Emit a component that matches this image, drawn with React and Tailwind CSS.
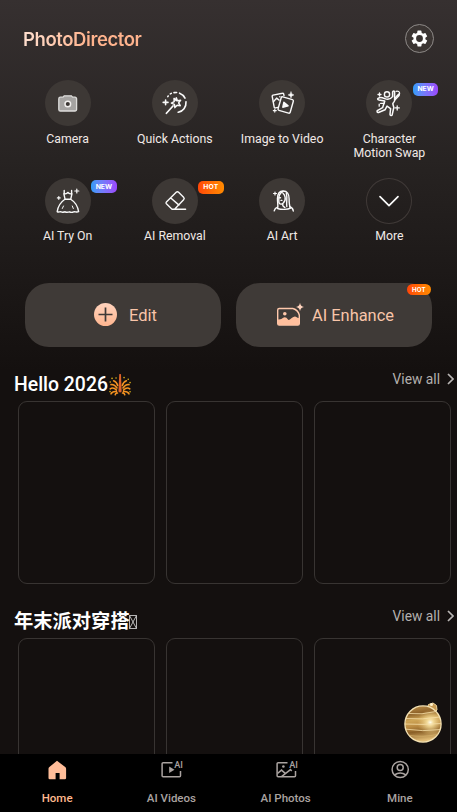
const stroke = {
  fill: "none",
  stroke: "currentColor",
  strokeWidth: 1.4,
  strokeLinecap: "round",
  strokeLinejoin: "round",
};

const CameraIcon = () => (
  <svg width="46" height="46" viewBox="0 0 46 46">
    <path d="M18 17.2l1.2-1.4h7.2l1.2 1.4h2.4a1.6 1.6 0 0 1 1.6 1.6v10.6a1.6 1.6 0 0 1-1.6 1.6H15.4a1.6 1.6 0 0 1-1.6-1.6V18.8a1.6 1.6 0 0 1 1.6-1.6z" fill="#a5a3a1" stroke="#dedddb" strokeWidth="1.3" />
    <circle cx="22.8" cy="24" r="2.8" fill="#3b3633" stroke="#f1efed" strokeWidth="1.5" />
  </svg>
);

const WandIcon = () => (
  <svg width="46" height="46" viewBox="0 0 46 46" {...stroke}>
    <path d="M24.3 17.8l1.1 3 3.2-.5-2 2.6 1.7 2.8-3.2-.5-2.2 2.4-.5-3.2-3-1.3 2.8-1.5-.2-3.2 2.3 2.2z" strokeWidth="1.5" />
    <path d="M21 26l-6.6 7.3" strokeWidth="1.7" />
    <path d="M13.6 20v4.8M11.2 22.4H16" strokeWidth="1.6" />
    <path d="M15.8 16.6l.4-.6M18.3 13.9l1-.5M22 12.6l2.6-.1M27.6 13.2c2.6 1 4.3 2.7 5.4 4.9M34 21.8c.4 5.4-3 9.4-7.8 10.5" strokeWidth="1.6" />
  </svg>
);

const ImageVideoIcon = () => (
  <svg width="46" height="46" viewBox="0 0 46 46" {...stroke}>
    <path d="M25 15.6l-.3-1.5a1 1 0 0 0-1.2-.8l-9.5 1.8a1 1 0 0 0-.8 1.2l2 10.8a1 1 0 0 0 1.2.8l2.6-.5" />
    <path d="M14.4 21.7l3.2-3.6 2.5 2M20.8 16.8h.1" />
    <rect x="20.4" y="18" width="12.6" height="14" rx="1.3" transform="rotate(16 26.7 25)" />
    <path d="M24.9 22.2l-1.1 5 5.3-1.3z" fill="currentColor" />
    <path d="M32 11.8q.3 2.8 3 3.1-2.7.3-3 3.1-.3-2.8-3-3.1 2.7-.3 3-3.1z" fill="currentColor" strokeWidth=".4" />
    <path d="M15.8 29.1v3M14.3 30.6h3" strokeWidth="1.1" />
  </svg>
);

const DancerIcon = () => (
  <svg width="46" height="46" viewBox="0 0 46 46" {...stroke}>
    <circle cx="21" cy="14.4" r="2.6" />
    <path d="M12.4 18.2c2.3-1.4 4.400-.4 6.400.4 3.200 1.200 6.100.2 7.800-2V12c.3-1.500 2-1.300 2 0v8.600c-.3 1.300-1.400 2-1.800 3.100l1 3.800-1.600 7.200c-.4 1.300-2.300 1-2.200-.4l.6-5.700-3.600-2.500-2 3.700-6.500 2.700c-1.500.3-2-1.600-.7-2.200l4.800-2.600 2.200-6.600-5.800-1.100c-1.400-.3-1.800-1.400-.6-1.800z" strokeWidth="1.500" />
    <path d="M30 11.300c4.700-.9 4.700 3.900 1.100 6.500l-2.500 2.400M32.700 14l-3.700 4M14.500 23.300h3.700" strokeWidth="1.200" />
    <path d="M31.200 25.800v4.200M29.100 27.900h4.200M13.500 13v3M12 14.500h3M13.200 24.200v2" strokeWidth="1.300" />
  </svg>
);

const DressIcon = () => (
  <svg width="46" height="46" viewBox="0 0 46 46" {...stroke}>
    <path d="M19.200 12.400v3.100M26.600 12.400v3.100M18.800 15.700c2.200.4 3.500-.2 4.100-1.300.6 1.100 1.900 1.700 4.100 1.300l-1.300 5.600h-5.600z" />
    <path d="M19.600 21.500c-4 2.700-6.600 7-7.400 12.100 1.400 1.100 2.600-.3 4 .3 1.500.8 2.600 0 4-.1 1.700 1 2.900.5 4.300 0 1.400.7 2.700.8 4.100.1 1.500-.7 2.700.8 5-.2-.9-5.600-3.400-9.700-7.600-12.200" />
    <path d="M18.500 28l-1.200 2.500M27.300 28l1 2.500" strokeWidth="1" />
    <path d="M31.800 11v4M29.800 13h4M13.800 18.500v2.800M12.400 19.900h2.800" strokeWidth="1.200" />
  </svg>
);

const EraserIcon = () => (
  <svg width="46" height="46" viewBox="0 0 46 46" {...stroke}>
    <path d="M20 31.200h13.600M20 31.200l-5.600-5.400a1.300 1.300 0 0 1 0-1.800l9.800-9.700a1.700 1.700 0 0 1 2.400 0l5 5a1.700 1.700 0 0 1 0 2.400L22.800 31M18.800 20l8.200 7.100" />
  </svg>
);

const ArtIcon = () => (
  <svg width="46" height="46" viewBox="0 0 46 46" {...stroke}>
    <path d="M18.600 30.500c.8-3.500-.3-6.300-.1-10.100.1-4.600 2-7.300 5.600-7.400 4.100-.1 6 3.100 6 7.700 0 4 .2 7 1.400 9.400-2.600 1.600-9.300 1.700-12.900.4z" />
    <path d="M24 13.400c-3.400 2-4.400 4.500-4.200 7.800l.1 3.200c.8 2 2.600 2.200 4.200.8 1.800-1.600 2.500-3.700 2-6.100-.3-1.600-.9-3-2.100-3.900M27.300 15.200c1.300 5.300-.1 8.200.5 13.300M23.800 26v1.800l2.100 1.800M20.900 19.700h.6M22 22.400h.9" />
    <path d="M18.600 29.100c-2 .7-3 2-3.400 3.700M30.700 28.800c2.200.6 3.300 2.100 3.600 4.200" />
    <path d="M16 14v3M14.500 15.500h3" strokeWidth="1.200" />
  </svg>
);

const MoreIcon = () => (
  <svg width="46" height="46" viewBox="0 0 46 46" {...stroke} strokeWidth="1.700">
    <path d="M14 18.600l9 9 9-9" />
  </svg>
);

const tools = [
  { label: "Camera", Icon: CameraIcon },
  { label: "Quick Actions", Icon: WandIcon },
  { label: "Image to Video", Icon: ImageVideoIcon },
  { label: "Character Motion Swap", Icon: DancerIcon, badge: "NEW" },
  { label: "AI Try On", Icon: DressIcon, badge: "NEW" },
  { label: "AI Removal", Icon: EraserIcon, badge: "HOT" },
  { label: "AI Art", Icon: ArtIcon },
  { label: "More", Icon: MoreIcon, outline: true },
];

function ToolItem({ label, Icon, badge, outline }) {
  return (
    <div className="flex flex-col items-center">
      <div
        className={`relative h-[46px] w-[46px] rounded-full text-[#fafafa] ${
          outline ? "shadow-[inset_0_0_0_1px_#403a38]" : "bg-[#3d3835]"
        }`}
      >
        <Icon />
        {badge === "NEW" && (
          <span className="absolute left-[46.5px] top-[2.5px] flex h-[13px] w-[25.5px] items-center justify-center rounded-[5px] bg-linear-to-r from-[#2a9cf8] to-[#9a45fc] font-[Inter,sans-serif] text-[6.8px] font-bold text-white">
            NEW
          </span>
        )}
        {badge === "HOT" && (
          <span className="absolute left-[46px] top-[3px] flex h-[13px] w-[26px] items-center justify-center rounded-[5px] bg-linear-to-r from-[#ff4608] to-[#ff8a00] font-[Inter,sans-serif] text-[6.8px] font-bold tracking-[0.2px] text-white">
            HOT
          </span>
        )}
      </div>
      <span className="mt-[5.6px] max-w-[84px] text-center text-[12.3px] leading-[14px] text-[#f1e9e6]">
        {label}
      </span>
    </div>
  );
}

const FireworkEmoji = () => (
  <svg className="ml-px" width="22" height="22" viewBox="0 0 22 22" fill="none" strokeLinecap="round">
    <path d="M7.500 16C5 13.500 3 13.500 1.200 14.800M7.500 17.600c-2.500-.3-4.500.2-5.500 2.300M8.500 19c-1.500.2-2.200.9-2.300 1.800M8 14C6.400 11.600 4.400 10.200 2 10.600M8.700 11.500C8 9 7 7.600 4.600 6.800M14.500 16c2.500-2.500 4.500-2.500 6.300-1.200M14.500 17.600c2.500-.3 4.500.2 5.500 2.300M13.500 19c1.500.2 2.200.9 2.300 1.800M14 14c1.600-2.400 3.600-3.800 6-3.400M13.300 11.500c.7-2.500 1.700-3.900 4.100-4.700" stroke="#f59322" strokeWidth="1.600" />
    <path d="M3 4.400h.1M7 4h.1M1.200 8h.1M1 17.600h.1M15 3.600h.1M19.200 5.200h.1M21 8.600h.1M21 17.800h.1" stroke="#d3aa19" strokeWidth="1.600" />
    <path d="M10.200.8a.9.900 0 0 1 1.800 0l.6 15.600a1.600 1.600 0 1 1-3.100 0z" fill="#de622b" />
  </svg>
);

// Box shown when the title's emoji has no glyph
const MissingGlyph = () => (
  <svg className="-ml-px" width="8" height="14" viewBox="0 0 8 14" fill="none" stroke="#dedede" strokeWidth=".8">
    <path d="M.5.5h7v13h-7zM.5.5l7 13M7.500.5l-7 13" />
  </svg>
);

function Section({ title, emoji, className, titleClass }) {
  return (
    <section className={className}>
      <div className="flex h-[29px] items-start justify-between pl-3.5">
        <h2 className={`flex h-[26px] items-center whitespace-nowrap leading-6 text-white ${titleClass}`}>
          {title}
          {emoji}
        </h2>
        <button className="-mt-[5px] flex h-6 items-center gap-[7px] pr-[3px] text-[13.8px] text-[#b3afad]">
          View all
          <svg width="7" height="12" viewBox="0 0 7 12" fill="none" stroke="#b8b5b3" strokeWidth="1.7">
            <path d="M1 1l5 5-5 5" />
          </svg>
        </button>
      </div>
      <div className="flex gap-[11px] pl-[18px]">
        {[0, 1, 2].map((i) => (
          <div key={i} className="h-[183px] w-[137px] shrink-0 rounded-[9px] border border-[#383432]" />
        ))}
      </div>
    </section>
  );
}

const Ornament = () => (
  <svg width="42" height="44" viewBox="0 0 42 44">
    <defs>
      <linearGradient id="gold" x1="0" y1="0" x2=".15" y2="1">
        <stop offset="0" stopColor="#c3964e" />
        <stop offset=".25" stopColor="#8c6027" />
        <stop offset=".42" stopColor="#cfa657" />
        <stop offset=".58" stopColor="#bd8e45" />
        <stop offset=".75" stopColor="#8a5f26" />
        <stop offset="1" stopColor="#e0bb75" />
      </linearGradient>
      <radialGradient id="shine" cx=".7" cy=".46" r=".36">
        <stop offset="0" stopColor="#fffdf0" />
        <stop offset=".25" stopColor="#fbe6a6" stopOpacity=".85" />
        <stop offset="1" stopColor="#e9c678" stopOpacity="0" />
      </radialGradient>
      <clipPath id="ball">
        <circle cx="20" cy="24" r="18" />
      </clipPath>
    </defs>
    <path d="M24.500 8l1-3.500 4.500-1.500 3.500 2.500.5 4.500-3 3z" fill="#c79a52" stroke="#f0d79e" />
    <circle cx="28.500" cy="4.600" r="1.500" fill="#fff3cf" />
    <circle cx="20" cy="24" r="18.100" fill="url(#gold)" />
    <circle cx="20" cy="24" r="18.100" fill="url(#shine)" stroke="#f4e1b2" strokeWidth="1.300" />
    <g clipPath="url(#ball)" fill="none" stroke="#f6dfaa" strokeWidth=".8">
      <path d="M5 13.500q14 1.500 28-2M2 18.500q18 1.500 35-1.500M1 24q19 1 38-.5M1 29q19 3 37 .5" />
      <path d="M4 35q16 3 32-1" stroke="#d9b66f" strokeWidth=".6" />
    </g>
  </svg>
);

const HomeIcon = () => (
  <svg width="24" height="24" viewBox="0 0 24 24">
    <path d="M12 2.800l8.200 6.200q.9.7.9 1.800v9.100q0 1.300-1.300 1.300h-5.200v-6.200h-4v6.200H4.800Q3.500 21.200 3.500 19.900v-9.100q0-1.100.9-1.800z" fill="#ffbd99" />
  </svg>
);

const VideosIcon = () => (
  <svg width="24" height="24" viewBox="0 0 24 24" fill="none" stroke="currentColor" strokeWidth="1.5">
    <path d="M13.500 4.700H4.100q-1 0-1 1v12q0 1 1 1h16.400q1 0 1-1V13" />
    <path d="M10.200 8.400v6.600l5.300-3.300z" fill="currentColor" stroke="none" />
    <text x="15.200" y="10.300" fontFamily="Roboto, sans-serif" fontSize="9.2" fontWeight="500" fill="currentColor" stroke="none">AI</text>
  </svg>
);

const PhotosIcon = () => (
  <svg width="24" height="24" viewBox="0 0 24 24" fill="none" stroke="currentColor" strokeWidth="1.5">
    <path d="M13.500 4.700H4.100q-1 0-1 1v12q0 1 1 1h16.400q1 0 1-1V13" />
    <path d="M3.500 15.500l4-3.400 4 3.500M7.500 18.600l9-7 1.200 1.400" />
    <circle cx="9.400" cy="8.500" r="1.300" fill="currentColor" stroke="none" />
    <text x="15.200" y="10.300" fontFamily="Roboto, sans-serif" fontSize="9.2" fontWeight="500" fill="currentColor" stroke="none">AI</text>
  </svg>
);

const MineIcon = () => (
  <svg width="24" height="24" viewBox="0 0 24 24" fill="none" stroke="currentColor" strokeWidth="1.5">
    <circle cx="12.2" cy="11.500" r="8.100" />
    <circle cx="12.2" cy="9.500" r="3" />
    <path d="M6.400 17q5.800-3.800 11.600 0" />
  </svg>
);

const tabs = [
  { label: "Home", Icon: HomeIcon, active: true },
  { label: "AI Videos", Icon: VideosIcon },
  { label: "AI Photos", Icon: PhotosIcon },
  { label: "Mine", Icon: MineIcon },
];

export default function App() {
  return (
    <div className="relative flex h-[812px] w-[457px] flex-col overflow-hidden bg-[#14100f] font-[Roboto,'Noto_Sans_CJK_SC',sans-serif]">
      <main className="flex-1 overflow-hidden bg-[linear-gradient(180deg,#363030_0px,#272322_160px,#14100f_370px)]">
        <header className="flex h-[76px] items-center justify-between px-[23px]">
          <h1 className="mt-[3px] bg-linear-to-r from-[#ffe0d0] to-[#ffb38d] to-55% bg-clip-text font-[Inter,sans-serif] text-[18.5px] font-semibold tracking-[-0.42px] text-transparent">
            PhotoDirector
          </h1>
          <button className="flex h-[29px] w-[29px] items-center justify-center rounded-full border border-[#8d8987] bg-[#3b3533]">
            <svg width="19" height="19" viewBox="0 0 24 24" fill="#fff">
              <path d="M19.400 13a7.600 7.600 0 0 0 0-2l2.100-1.600c.2-.2.3-.5.1-.7l-2-3.400c-.1-.2-.4-.3-.6-.2l-2.500 1a7.500 7.500 0 0 0-1.700-1l-.4-2.600a.5.500 0 0 0-.5-.5h-4a.5.500 0 0 0-.5.500L9 5.100a7.500 7.500 0 0 0-1.700 1l-2.500-1c-.2-.1-.5 0-.6.200l-2 3.400c-.2.200-.1.500.1.700L4.500 11a7.600 7.600 0 0 0 0 2l-2.200 1.600c-.2.200-.3.500-.1.700l2 3.400c.1.200.4.300.6.200l2.500-1c.5.400 1.100.7 1.700 1l.4 2.600c0 .3.200.5.500.5h4c.3 0 .5-.2.500-.5l.4-2.600a7.500 7.500 0 0 0 1.700-1l2.500 1c.2.100.5 0 .6-.2l2-3.400c.2-.2.100-.5-.1-.7zM12 16.300a4.300 4.300 0 1 1 0-8.600 4.300 4.300 0 0 1 0 8.600z" />
            </svg>
          </button>
        </header>

        <div className="grid grid-cols-4 gap-y-[18px] px-3.5 pt-1">
          {tools.map((tool) => (
            <ToolItem key={tool.label} {...tool} />
          ))}
        </div>

        <div className="mt-[39.8px] flex gap-[15px] pl-[25px]">
          <button className="flex h-16 w-[196px] items-center justify-center gap-3 rounded-3xl bg-[#3f3a37] pl-[5px] text-[16.5px] text-[#f9c5a9]">
            <svg width="23" height="23" viewBox="0 0 23 23">
              <defs>
                <linearGradient id="peach" x1="0" y1="0" x2="0" y2="1">
                  <stop offset="0" stopColor="#ffd3bd" />
                  <stop offset="1" stopColor="#ffb690" />
                </linearGradient>
              </defs>
              <circle cx="11.500" cy="11.500" r="11.500" fill="url(#peach)" />
              <path d="M11.500 4.500v14M4.500 11.500h14" stroke="#3f3a37" strokeWidth="1.700" />
            </svg>
            <span className="pt-0.5">Edit</span>
          </button>
          <button className="relative flex h-16 w-[196px] items-center justify-center gap-2 rounded-3xl bg-[#3f3a37] pl-0.5 text-[16.4px] text-[#f9c5a9]">
            <svg width="28" height="26" viewBox="0 0 28 26">
              <path d="M17 6.500H3.200Q1.700 6.500 1.700 8v13.500Q1.700 23 3.200 23h18.600q1.500 0 1.500-1.500v-8.500Q22 8 17 6.500" fill="none" stroke="#ffc8ab" strokeWidth="1.400" />
              <path d="M1.700 17.500q3.500.5 5.500-1.700 2.500-1.500 5 2 1.500.6 3.500-1.700 3-2.600 5-.8 1 1 2.600.7v5.500Q23.300 23 21.800 23H3.200Q1.700 23 1.700 21.500z" fill="#ffbf9d" />
              <circle cx="8.800" cy="11.700" r="1.800" fill="#ffc8ab" />
              <path d="M24 .8q.6 3.700 4 4.200-3.400.5-4 4.200-.6-3.700-4-4.200 3.400-.5 4-4.200z" fill="#ffd3bd" />
            </svg>
            <span className="pt-0.5">AI Enhance</span>
            <span className="absolute right-px top-px flex h-[11px] w-6 items-center justify-center rounded-full bg-linear-to-r from-[#ff4308] to-[#ff8a00] font-[Inter,sans-serif] text-[6.2px] font-bold tracking-[0.2px] text-white">
              HOT
            </span>
          </button>
        </div>

        <Section
          title="Hello 2026"
          titleClass="text-[19.4px] font-medium"
          emoji={<FireworkEmoji />}
          className="mt-[25px]"
        />
        <Section
          title="年末派对穿搭"
          titleClass="text-[19.3px] font-bold"
          emoji={<MissingGlyph />}
          className="mt-[25px]"
        />
      </main>

      <nav className="grid h-[58px] grid-cols-4 bg-black">
        {tabs.map(({ label, Icon, active }) => (
          <button
            key={label}
            className={`flex flex-col items-center pt-1 text-[11.5px] font-medium leading-[14px] ${
              active ? "text-[#ffb98f]" : "text-[#aaa3a0]"
            }`}
          >
            <Icon />
            <span className="mt-[9px]">{label}</span>
          </button>
        ))}
      </nav>

      <div className="absolute left-[403px] top-[700px]">
        <Ornament />
      </div>
    </div>
  );
}
